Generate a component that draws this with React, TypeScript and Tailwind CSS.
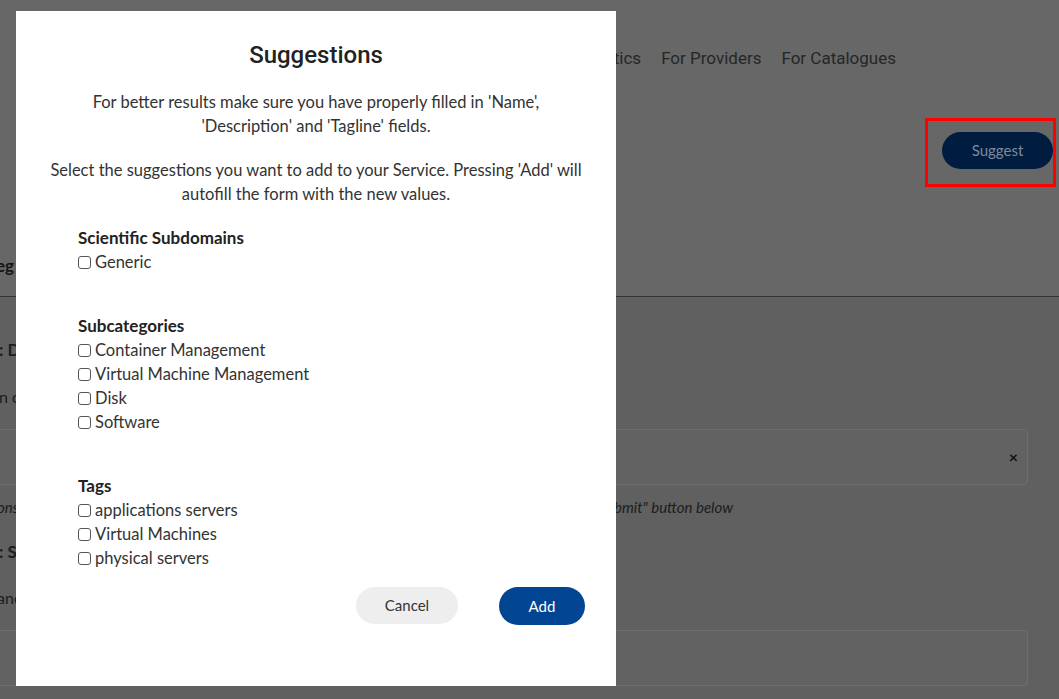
import { useState } from "react";

const body = "font-['Lato','Liberation_Sans',sans-serif]";

const groups = [
  { title: "Scientific Subdomains", items: ["Generic"] },
  {
    title: "Subcategories",
    items: ["Container Management", "Virtual Machine Management", "Disk", "Software"],
  },
  { title: "Tags", items: ["applications servers", "Virtual Machines", "physical servers"] },
];

function SuggestionsModal() {
  const [checked, setChecked] = useState<Record<string, boolean>>({});

  return (
    <div className="fixed left-[16px] top-[11px] z-20 flex h-[675px] w-[600px] flex-col bg-white px-8 pt-[29px] text-[#333]">
      <h2 className="text-center font-['Roboto',sans-serif] text-[24px] font-medium leading-[30px] text-[#222]">
        Suggestions
      </h2>

      <div className={`${body} mt-[20px] text-center text-[16.5px] leading-6`}>
        <p>
          For better results make sure you have properly filled in 'Name',
          <br />
          'Description' and 'Tagline' fields.
        </p>
        <p className="mt-5">
          Select the suggestions you want to add to your Service. Pressing 'Add' will
          <br />
          autofill the form with the new values.
        </p>
      </div>

      <div className={`${body} mt-[20px] flex flex-col gap-10 pl-[30px] text-[16.5px] leading-6`}>
        {groups.map((g) => (
          <div key={g.title}>
            <div className="text-[17px] font-bold text-[#222]">{g.title}</div>
            {g.items.map((it) => (
              <label key={it} className="flex items-center gap-[4px]">
                <input
                  type="checkbox"
                  checked={!!checked[it]}
                  onChange={() => setChecked((c) => ({ ...c, [it]: !c[it] }))}
                  className="h-[13px] w-[13px] appearance-none rounded-[3px] border border-[#555] bg-white"
                />
                <span>{it}</span>
              </label>
            ))}
          </div>
        ))}
      </div>

      <div className={`${body} mt-[17px] flex justify-end gap-[41px] text-[15px]`}>
        <button className="h-[37px] w-[102px] rounded-full bg-[#eeeeee] text-[#333]">Cancel</button>
        <button className="mr-[-1px] h-[38px] w-[86px] rounded-full bg-[#024693] text-white">Add</button>
      </div>
    </div>
  );
}

export default function App() {
  return (
    <div className="relative h-[699px] w-[1059px] overflow-hidden bg-[#606060] font-['Roboto',sans-serif]">
      {/* Dimmed page behind the modal */}
      <header className="flex h-[120px] items-center justify-end gap-5 bg-[#676767] pb-[2px] pr-[163px] text-[17px] text-[#262626] shadow-[0_2px_4px_rgba(0,0,0,0.15)]">
        <span>Statistics</span>
        <span>For Providers</span>
        <span>For Catalogues</span>
      </header>

      <div className="flex h-[177px] flex-col border-b border-[#333] bg-[#676767]">
        <div className="flex justify-end pr-[6px] pt-[12px]">
          <button className={`${body} h-[37px] w-[111px] rounded-full bg-[#001d40] text-[15px] text-[#7d8a9b]`}>
            Suggest
          </button>
        </div>
        <div className={`${body} -ml-[30px] mt-[84px] text-[17px] font-bold text-[#151515]`}>Categ</div>
      </div>

      <div className={`${body} flex flex-col text-[#1c1c1c]`}>
        <div className="-ml-[1px] mt-[41px] text-[17px] font-bold leading-6">: D</div>
        <div className="-ml-[1px] mt-[23px] text-[16px] leading-6">n o</div>
        <div className="-ml-[20px] mt-[20px] mr-[31px] flex h-[56px] items-center justify-end rounded-[4px] border border-[#6e6e6e] bg-[#626262] pr-[9px]">
          <span className="text-[16px] font-bold text-[#111]">×</span>
        </div>
        <div className="mt-[10px] flex h-[24px] items-center text-[15px] italic">
          <span className="-ml-[3px]">ons</span>
          <span className="ml-auto mr-[326px]">bmit" button below</span>
        </div>
        <div className="-ml-[1px] mt-[21px] text-[17px] font-bold leading-6">: S</div>
        <div className="-ml-[3px] mt-[22px] text-[16px] leading-6">anc</div>
        <div className="-ml-[20px] mt-[20px] mr-[31px] h-[56px] rounded-[4px] border border-[#6e6e6e] bg-[#626262]" />
      </div>

      {/* annotation highlight */}
      <div className="absolute left-[925px] top-[118px] z-30 h-[69px] w-[131px] border-[3px] border-[#ff0000]" />

      <SuggestionsModal />
    </div>
  );
}
